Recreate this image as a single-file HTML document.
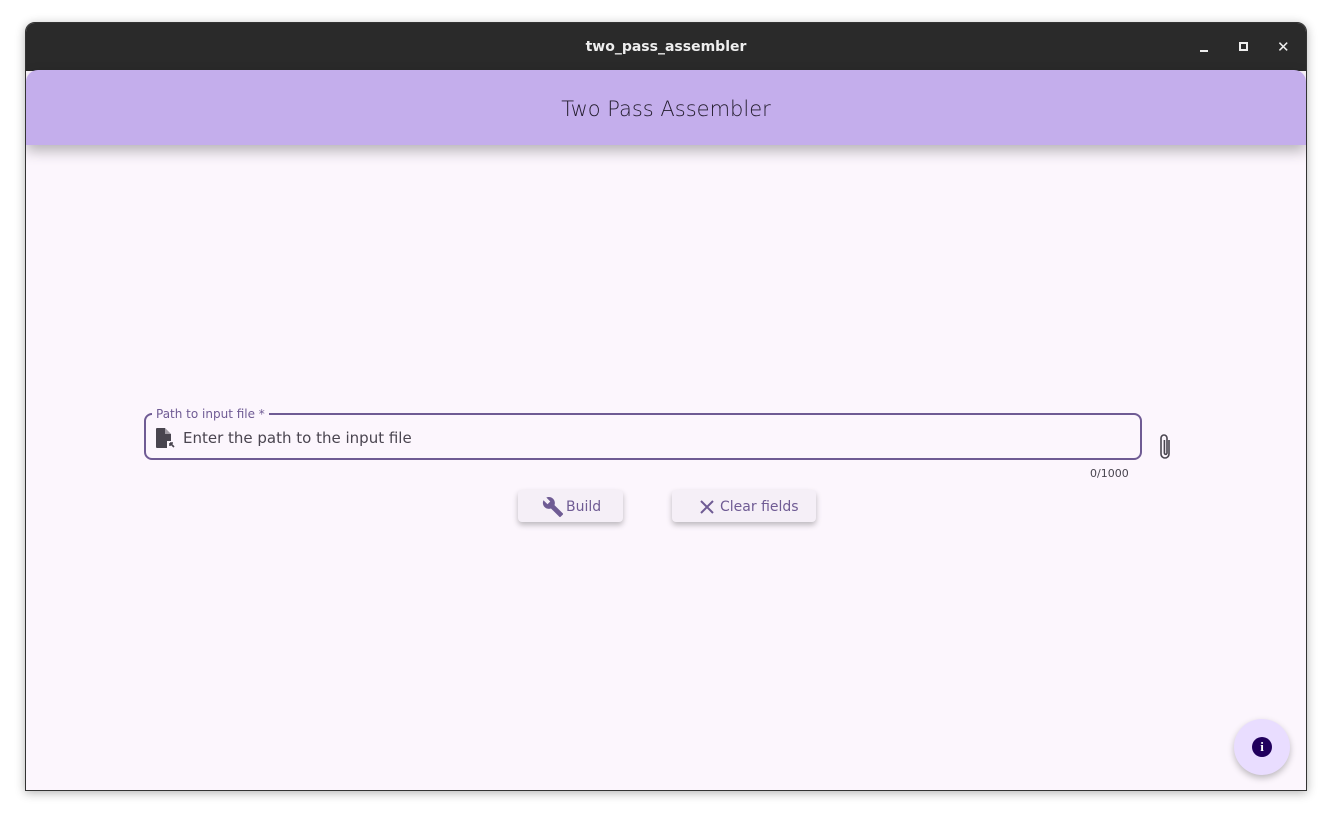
<!DOCTYPE html>
<html><head><style>
body{margin:0;width:1332px;height:819px;background:#fff;font-family:"DejaVu Sans","Liberation Sans",sans-serif;position:relative;overflow:hidden}
.win{position:absolute;left:25px;top:22px;width:1282px;height:769px;border-radius:10px 10px 0 0;overflow:hidden;box-shadow:0 2px 10px rgba(0,0,0,.3);border:1px solid #333;box-sizing:border-box;background:#fcf6fd}
.title{height:48px;background:#2a2a2a;color:#eee;font-size:14px;font-weight:bold;text-align:center;line-height:48px;position:relative}
.app{position:absolute;left:0;top:47px;width:1280px;height:75px;background:#c4aeec;border-radius:12px 12px 0 0;box-shadow:0 6px 14px rgba(0,0,0,.28);text-align:center;line-height:78px;font-size:21px;color:#221c2c;font-family:"DejaVu Sans",sans-serif;font-weight:300}
.field{position:absolute;left:118px;top:390px;width:998px;height:47px;border:2px solid #6f5b94;border-radius:8px;box-sizing:border-box}
.lbl{position:absolute;left:6px;top:-8px;background:#fcf6fd;padding:0 4px;font-size:12px;color:#6f5b94}
.ph{position:absolute;left:37px;top:14px;font-size:15px;color:#4a4550}
.btn{position:absolute;top:467px;height:32px;background:#f5eff7;border-radius:4px;box-shadow:0 3px 6px rgba(0,0,0,.25);color:#6f5b94;font-size:14px;line-height:35px;box-sizing:border-box}
</style></head><body>
<div class="win">
<div class="title">two_pass_assembler
<span style="position:absolute;left:1174px;top:27px;width:8px;height:2px;background:#eee"></span>
<span style="position:absolute;left:1213px;top:19px;width:5px;height:5px;border:2px solid #eee"></span>
<span style="position:absolute;left:1251px;top:0;font-size:15px">✕</span>
</div>
<div class="app">Two Pass Assembler</div>
<div class="field"><span class="lbl">Path to input file *</span>
<svg style="position:absolute;left:9px;top:12px" width="20" height="22" viewBox="0 0 20 22"><path d="M1 2a1 1 0 0 1 1-1h8l6 6v7h-4v7H2a1 1 0 0 1-1-1z" fill="#49454f"/><path d="M10 1v6h6z" fill="#fcf6fd" opacity=".5"/><path d="M19 20l-4-4M15 16v3M15 16h3" stroke="#49454f" stroke-width="1.6" fill="none"/></svg>
<span class="ph">Enter the path to the input file</span></div>
<svg style="position:absolute;left:1131px;top:409px" width="18" height="30" viewBox="0 0 18 30"><path d="M12 8v14a4 4 0 0 1-8 0V6a3 3 0 0 1 6 0v15a1.3 1.3 0 0 1-2.6 0V8" stroke="#49454f" stroke-width="1.6" fill="none"/></svg>
<div style="position:absolute;left:1064px;top:444px;font-size:11px;color:#49454f">0/1000</div>
<div class="btn" style="left:492px;width:105px"><svg style="position:absolute;left:24px;top:6px" width="22" height="22" viewBox="0 0 24 24"><path d="M22.7 19l-9.1-9.1c.9-2.3.4-5-1.5-6.9-2-2-5-2.4-7.4-1.3L9 6 6 9 1.6 4.7C.4 7.1.9 10.1 2.9 12.1c1.9 1.9 4.6 2.4 6.9 1.5l9.1 9.1c.4.4 1 .4 1.4 0l2.3-2.3c.5-.4.5-1.1.1-1.4z" fill="#6f5b94"/></svg><span style="position:absolute;left:48px">Build</span></div>
<div class="btn" style="left:646px;width:144px"><svg style="position:absolute;left:28px;top:10px" width="14" height="14" viewBox="0 0 14 14"><path d="M1 1l12 12M13 1L1 13" stroke="#6f5b94" stroke-width="2"/></svg><span style="position:absolute;left:48px">Clear fields</span></div>
<div style="position:absolute;left:1208px;top:696px;width:56px;height:56px;border-radius:50%;background:#e9ddff;box-shadow:0 3px 7px rgba(0,0,0,.25)">
<div style="position:absolute;left:18px;top:18px;width:20px;height:20px;border-radius:50%;background:#21005d;color:#fff;font-size:13px;font-weight:bold;text-align:center;line-height:20px;font-family:'Liberation Serif',serif">i</div></div>
</div>
</body></html>
